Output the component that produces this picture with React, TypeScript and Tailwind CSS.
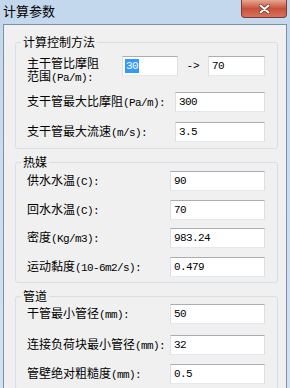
import React from 'react';

const cjk = { fontFamily: '"SimSun", "Noto Sans CJK SC", sans-serif' };

// label = [中文部分, 半角部分]
type Row = { label: [string, string]; value: string; top: number };

const heatRows: Row[] = [
    { label: ['供水水温', '(C):'], value: '90', top: 2 },
    { label: ['回水水温', '(C):'], value: '70', top: 9 },
    { label: ['密度', '(Kg/m3):'], value: '983.24', top: 8 },
    { label: ['运动黏度', '(10-6m2/s):'], value: '0.479', top: 9 },
];

const pipeRows: Row[] = [
    { label: ['干管最小管径', '(mm):'], value: '50', top: 1 },
    { label: ['连接负荷块最小管径', '(mm):'], value: '32', top: 11 },
    { label: ['管壁绝对粗糙度', '(mm):'], value: '0.5', top: 9 },
];

const Label = ({ parts }: { parts: [string, string] }) => (
    <div className="text-[12px] leading-[13px] text-black whitespace-nowrap">
        {parts[0]}
        <span className="font-['Liberation_Mono',monospace] text-[11px] tracking-[-0.6px]">{parts[1]}</span>
    </div>
);

const Field = ({ value, width, selected }: { value: string; width: string; selected?: boolean }) => (
    <div
        className={`${width} h-[20px] shrink-0 bg-white border border-t-[#abadb3] border-x-[#dbdfe6] border-b-[#e3e9ef] flex items-center pl-[2px] leading-[14px]`}
    >
        <span
            className={`font-['Liberation_Mono',monospace] text-[11px] tracking-[-0.6px] leading-[14px] px-[1px] ${selected ? 'bg-[#3399ff] text-white' : 'text-black'}`}
        >
            {value}
        </span>
    </div>
);

const Group = ({ title, className, children }: { title: string; className: string; children: React.ReactNode }) => (
    <fieldset className={`ml-[11px] mr-[8px] border border-[#d5dfe5] rounded-[3px] ${className}`}>
        <legend className="ml-[5px] px-[2px] text-[12px] leading-[14px] text-black">{title}</legend>
        {children}
    </fieldset>
);

export default function App() {
    return (
        <div className="w-[290px] h-[388px] overflow-hidden flex flex-col bg-gradient-to-b from-[#c3d7ed] to-[#d2e2f3]" style={cjk}>
            {/* 标题栏 */}
            <div className="h-[24px] shrink-0 flex justify-between">
                <span className="pl-[3px] pt-[3px] text-[13px] leading-[15px] text-black">计算参数</span>
                <div className="mr-[3px] w-[46px] h-[18px] rounded-b-[4px] border border-t-0 border-[#7a3b33] bg-gradient-to-b from-[#e4a795] via-[#c9503a] to-[#d7735c] flex items-center justify-center">
                    <svg width="11" height="10" viewBox="0 0 11 10">
                        <path d="M1.5 1.5 L9.5 8.5 M9.5 1.5 L1.5 8.5" stroke="#5a2a24" strokeWidth="3.2" strokeLinecap="round" />
                        <path d="M1.5 1.5 L9.5 8.5 M9.5 1.5 L1.5 8.5" stroke="#ffffff" strokeWidth="2" strokeLinecap="round" />
                    </svg>
                </div>
            </div>

            {/* 客户区 */}
            <div className="flex-1 mx-[3px] border-l border-t border-r border-[#7f90a6] bg-[#f0f0f0] flex flex-col">
                <Group title="计算控制方法" className="mt-[10px] pb-[6px]">
                    <div className="mt-[7px] pl-[11px] flex items-start h-[26px]">
                        <div className="w-[95px] flex flex-col">
                            <div className="text-[12px] leading-[13px]">主干管比摩阻</div>
                            <Label parts={['范围', '(Pa/m):']} />
                        </div>
                        <Field value="30" width="w-[56px]" selected />
                        <span className="w-[30px] text-center font-['Liberation_Mono',monospace] text-[11px] leading-[20px]">-&gt;</span>
                        <Field value="70" width="w-[57px]" />
                    </div>
                    <div className="mt-[10px] pl-[11px] flex items-center">
                        <div className="w-[148px]"><Label parts={['支干管最大比摩阻', '(Pa/m):']} /></div>
                        <Field value="300" width="w-[90px]" />
                    </div>
                    <div className="mt-[10px] pl-[11px] flex items-center">
                        <div className="w-[148px]"><Label parts={['支干管最大流速', '(m/s):']} /></div>
                        <Field value="3.5" width="w-[90px]" />
                    </div>
                </Group>

                <Group title="热媒" className="mt-[6px] pb-[5px]">
                    {heatRows.map((r) => (
                        <div key={r.value} className="pl-[11px] flex items-center" style={{ marginTop: r.top }}>
                            <div className="w-[143px]"><Label parts={r.label} /></div>
                            <Field value={r.value} width="w-[95px]" />
                        </div>
                    ))}
                </Group>

                <Group title="管道" className="mt-[6px] pb-[5px]">
                    {pipeRows.map((r) => (
                        <div key={r.value} className="pl-[11px] flex items-center" style={{ marginTop: r.top }}>
                            <div className="w-[143px]"><Label parts={r.label} /></div>
                            <Field value={r.value} width="w-[95px]" />
                        </div>
                    ))}
                </Group>
            </div>
        </div>
    );
}
